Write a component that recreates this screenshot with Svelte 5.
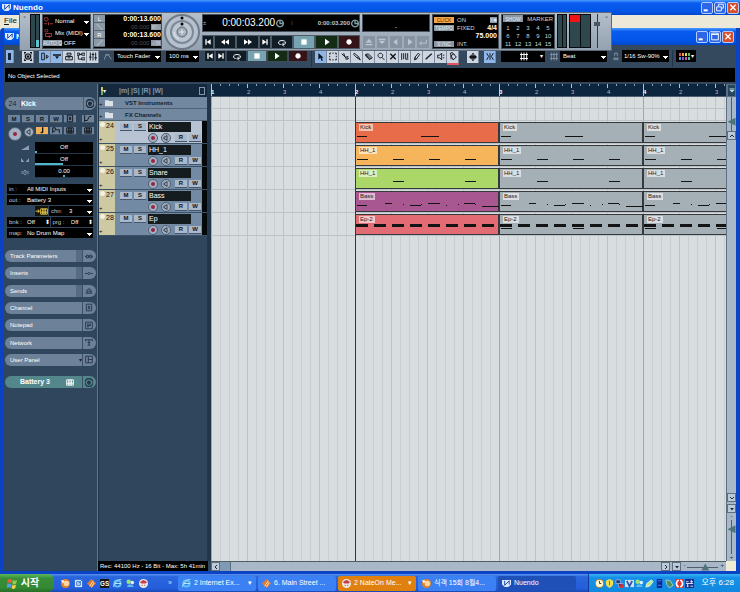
<script>
  // glyphs on a 12x12 grid; "line" ones are stroked, the rest filled
  const glyphs = {
    toStart: { d: 'M2 2h2v8H2zM10 2v8L4 6z' },
    rewind: { d: 'M6 2v8L0 6zM12 2v8L6 6z' },
    forward: { d: 'M0 2v8l6-4zM6 2v8l6-4z' },
    toEnd: { d: 'M8 2h2v8H8zM2 2v8l6-4z' },
    cycle: { d: 'M4 9H3Q0 8 1 5Q2 3 6 3Q10 3 11 5Q12 8 9 9H7M9 6L6 9l3 3', line: true },
    stop: { d: 'M2 2h8v8H2z' },
    play: { d: 'M3 1v10l7-5z' },
    record: { d: 'M6 2a4 4 0 1 0 .1 0z' },
    arrow: { d: 'M2 0v10l3-3l2 5l2-1l-2-4h3z' },
    range: { d: 'M1 1h2M5 1h2M9 1h2v2M11 5v2M11 9v2H9M7 11H5M3 11H1V9M1 7V5M1 3V1', line: true },
    split: { d: 'M1 2l6 5M4 1l2 6M7 7l4-1M7 7l1 4M10 8a1 1 0 1 0 .1 0', line: true },
    glue: { d: 'M2 1l6 5l3 5l-5-3l-5-5z M8 6L6 8', line: true },
    erase: { d: 'M1 3l4-1l6 6l-4 2zM1 3v2l6 6v-1M3 3l6 6', line: true },
    zoom: { d: 'M5 1a3.500 3.500 0 1 0 .1 0M7 7l4 4', line: true },
    mute: { d: 'M2 2l8 8M10 2l-8 8', line: true, bold: true },
    warp: { d: 'M1 1v10M4 1v9M7 1v9M10 1v8M7 10h4', line: true },
    draw: { d: 'M2 11l1-4l5-6l2 2l-5 7zM3 7l2 3', line: true },
    line: { d: 'M1 10l9-8', line: true, bold: true },
    speaker: { d: 'M1 4h3l3-3v10L4 8H1zM9 4h2M9 8h2', line: true },
    paint: { d: 'M3 5l4-3l4 5l-5 4zM3 5L2 1l3-1l2 3M3 5v5', line: true },
    inspect: { d: 'M1 1h4v10H1zM8 4l3 2l-3 3z', line: true },
    info: { d: 'M0 2h12v2H0zM3 5h6L6 9z' },
    overview: { d: 'M3 1h6v3H3zM1 6h10v5H1zM4 8h4', line: true },
    pool: { d: 'M0 1h4v3H0zM7 1h5v3H7zM7 8h5v3H7zM2 4v6h5M4 3h3', line: true },
    mixer: { d: 'M2 0v12M6 0v12M10 0v12M0 7h4M4 3h4M8 8h4', line: true },
    constrain: { d: 'M6 2a4 4 0 1 0 .1 0M6 5a1 1 0 1 0 .1 0M0 3V0h3M9 0h3v3M0 9v3h3M9 12h3V9', line: true, bold: true },
    autom: { d: 'M0 11l3-7h4l4 6M2 3h3M6 3h2', line: true },
    scroll: { d: 'M5 0h2v4h1V2l4 4l-4 4V8H7v4H5V8H4v2L0 6l4-4v2h1z' },
    snap: { d: 'M6 1v10M1 1l3 5l-3 5M11 1L8 6l3 5', line: true },
    grid: { d: 'M2 0v12M6 0v12M10 0v12M0 3h12M0 9h12', line: true },
    quantize: { d: 'M4 1v4M8 1v4M4 1h4M3 8h2v3H3zM7 8h2v3H7z', line: true },
    up: { d: 'M6 1l5 6H1zM1 9h10v2H1z' },
    down: { d: 'M6 9L1 4h10zM1 1h10v2H1z' },
    left: { d: 'M2 6l6-5v10z' },
    right: { d: 'M3 1v10l7-5z' },
    enter: { d: 'M11 2v5H1M4 4L1 7l3 3', line: true },
    edit: { d: 'M4 6h4Q8 4 6 4Q4 4 4 6Q4 9 8 8M6 0a6 6 0 1 0 .1 0', line: true, bold: true },
    monitor: { d: 'M2 4h2l4-3v10L4 8H2z', line: true },
    folder: { d: 'M0 2h5l1 1h6v8H0z' },
    note: { d: 'M7 1v8M7 9H4', line: true, bold: true },
    link: { d: 'M0 6h2M10 6h2M2 4h3v4H2zM7 4h3v4H7zM5 6h2', line: true },
    insert: { d: 'M0 6h4M8 6h4M6 4l2 2l-2 2l-2-2z', line: true },
    send: { d: 'M1 10h10M3 10V7h6v3M2 7Q6 0 10 7', line: true },
    strip: { d: 'M2 1h8v10H2zM5 4h2v4H5z', line: true },
    pad: { d: 'M1 1h10v10H1zM3 4h6M3 6h6M3 8h3', line: true },
    net: { d: 'M0 2h12M6 2v8M4 10h4M1 2v2M11 2v2M4 6h4', line: true },
    panes: { d: 'M1 1h10v10H1zM5 1v10M5 6h6', line: true },
    keys: { d: 'M1 2h10v8H1zM4 2v8M6 2v8M8 2v8M1 7h10', line: true },
    bridge: { d: 'M1 10V2h4v3h6v5M1 7h4', line: true },
    curve: { d: 'M1 11V1M1 9h4l3-6h3', line: true },
    ramp: { d: 'M0 9L12 2v7z' },
    pan: { d: 'M0 3v6h5zM12 3v6H7z' },
    delay: { d: 'M2 4L0 6l2 2M10 4l2 2l-2 2M6 3a3 3 0 1 0 .1 0M6 4v2h1', line: true },
    clock: { d: 'M6 1a5 5 0 1 0 .1 0M6 2v4h4', line: true, bold: true },
    chevUp: { d: 'M2 8l4-4l4 4', line: true, bold: true },
    chevDown: { d: 'M2 4l4 4l4-4', line: true, bold: true },
    chevLeft: { d: 'M8 2L4 6l4 4', line: true, bold: true },
    chevRight: { d: 'M4 2l4 4l-4 4', line: true, bold: true },
    caret: { d: 'M2 4h8l-4 5z' },
    min: { d: 'M1 8h6v3H1z' },
    restore: { d: 'M4 1h7v6H8M4 4V1M1 5h7v6H1z', line: true },
    max: { d: 'M1 1h10v10H1zM1 3h10', line: true },
    close: { d: 'M2 2l8 8M10 2l-8 8', line: true, bold: true }
  };

  const transport = [
    ['toStart', 'Go to start'],
    ['rewind', 'Rewind', 'wide'],
    ['forward', 'Forward', 'wide'],
    ['toEnd', 'Go to end'],
    ['cycle', 'Cycle', 'wide'],
    ['stop', 'Stop', 'wide stop'],
    ['play', 'Play', 'wide play'],
    ['record', 'Record', 'wide rec']
  ];
  const miniTransport = transport.filter(([name]) => name !== 'rewind' && name !== 'forward');
  const views = ['inspect', 'info', 'overview', 'pool', 'mixer'];
  const tools = ['arrow', 'range', 'split', 'glue', 'erase', 'zoom', 'mute', 'warp', 'draw', 'line', 'speaker', 'paint'];
  const nudge = ['up', 'down', 'left', 'right', 'enter'];
  const swatches = ['#e64d3c', '#f0a53c', '#e6dc46', '#5abe50', '#46a0dc', '#8c5ac8', '#c85ab4', '#46c8a0'];

  const beats4 = [1, 37, 73, 109].map((x) => [x, 14, 11, 1]);
  const ep = Array.from({ length: 8 }, (_, i) => [i * 18, 10, 12, 3]);
  const bass = [
    [1, 14, 10, 1], [29, 12, 7, 1], [47, 13, 1, 1], [54, 14, 11, 1], [65, 13, 1, 1], [72, 12, 12, 1],
    [90, 14, 1, 1], [102, 13, 1, 1], [108, 12, 11, 1], [119, 13, 1, 1], [126, 15, 17, 1]
  ];

  const tracks = [
    { no: 24, name: 'Kick', clip: 'Kick', color: '#e86c4a', notes: [[1, 14, 10, 1], [65, 14, 18, 1]] },
    { no: 25, name: 'HH_1', clip: 'HH_1', color: '#f7b55b', notes: beats4 },
    { no: 26, name: 'Snare', clip: 'HH_1', color: '#abd768', notes: [[37, 13, 11, 1], [109, 13, 11, 1]] },
    { no: 27, name: 'Bass', clip: 'Bass', color: '#a95791', notes: bass },
    { no: 28, name: 'Ep', clip: 'Ep-2', color: '#e36b74', notes: ep }
  ];
  let selected = $state(24);

  const faders = [
    { icon: 'ramp', label: 'Volume', value: 'Off', from: 0, to: 3 },
    { icon: 'pan', label: 'Pan', value: 'Off', from: 0, to: 48 },
    { icon: 'delay', label: 'Delay', value: '0.00', from: 48, to: 51 }
  ];
  const tabs = [
    ['Track Parameters', 'link', true],
    ['Inserts', 'insert', true],
    ['Sends', 'send', true],
    ['Channel', 'strip'],
    ['Notepad', 'pad'],
    ['Network', 'net'],
    ['User Panel', 'panes']
  ];
  const beats = Array.from({ length: 15 }, (_, i) => ({ bar: i % 4 === 0, n: i % 4 === 0 ? i / 4 + 1 : (i % 4) + 1 }));

  const tasks = [
    { text: '2 Internet Ex...', app: 'ie', more: true },
    { text: '6. Main Street ...', app: 'winamp' },
    { text: '2 NateOn Me...', app: 'nate', more: true, cls: 'alert' },
    { text: '식객 15회 8월4...', app: 'ball' },
    { text: 'Nuendo', app: 'nuendo', cls: 'active' }
  ];
  const quick = ['ball', 'desk', 'winamp', 'gs', 'ie', 'msn', 'nate'];
  const tray = ['clock', 'shield', 'net', 'v', 'msn', 'pen', 'panel', 'usb', 'stopper', 'bars'];
</script>

{#snippet glyph(name)}
  <svg class="glyph" class:line={glyphs[name].line} class:bold={glyphs[name].bold} viewBox="0 0 12 12" aria-hidden="true">
    <path d={glyphs[name].d} />
  </svg>
{/snippet}

{#snippet app(name)}
  <svg class="app" viewBox="0 0 10 10" aria-hidden="true">
    {#if name === 'ie'}
      <circle cx="5" cy="5" r="3.500" fill="none" stroke="#5fc8f5" stroke-width="2" />
      <path d="M2 5h7M1 9Q-1 8 4 3T9 1" fill="none" stroke="#c5ecff" />
    {:else if name === 'winamp'}
      <path d="M5 0l5 5l-5 5l-5-5z" fill="#e07a30" />
      <path d="M3 8L7 2M5 9l3-5" stroke="#fff0c0" />
    {:else if name === 'nate'}
      <circle cx="5" cy="5" r="5" fill="#f4e8e0" />
      <path d="M1 4Q5 -2 9 4L7 5H3z" fill="#c33f4e" />
      <path d="M3 7h1M6 7h1" stroke="#333" />
    {:else if name === 'ball'}
      <circle cx="5" cy="5" r="5" fill="#e88024" />
      <circle cx="6" cy="5" r="3" fill="#ffd9a0" />
      <path d="M0 1l4 1l-2 3z" fill="#fff" />
    {:else if name === 'desk'}
      <path d="M1 1h8v8H1z" fill="#d4e8fa" />
      <path d="M3 7V3h4v4zM5 5l4-4" fill="none" stroke="#286ab8" />
    {:else if name === 'gs'}
      <path d="M0 0h10v10H0z" fill="#151515" />
      <text x="0" y="8" font-size="7" font-weight="bold" fill="#fff">GS</text>
    {:else if name === 'msn'}
      <circle cx="3" cy="3" r="2.500" fill="#9be078" />
      <circle cx="7" cy="4" r="2" fill="#d7f0ff" />
      <path d="M1 9Q2 5 5 6T9 9z" fill="#62b8e8" />
    {:else if name === 'nuendo'}
      <path d="M0 1h10v5L7 9H3L0 6z" fill="#dce8ff" />
      <path d="M3 2v5l5-5v4" fill="none" stroke="#0c3d9c" />
    {:else if name === 'clock'}
      <circle cx="5" cy="5" r="4.500" fill="#fff6cc" stroke="#a77a28" />
      <path d="M5 2v3h2" fill="none" stroke="#333" />
    {:else if name === 'shield'}
      <path d="M5 0l4 2v3q0 3-4 5q-4-2-4-5V2z" fill="#f1df50" />
      <path d="M5 2v5" stroke="#7e6a10" />
    {:else if name === 'net'}
      <path d="M1 1h5v4H1zM4 5h5v4H4z" fill="#213874" stroke="#8fa9d8" />
      <path d="M6 6l4 4M10 6L6 10" stroke="#e82c2c" stroke-width="2" />
    {:else if name === 'v'}
      <path d="M0 1h10v8H0z" fill="#cfe0f5" />
      <path d="M2 2l3 6l3-6" fill="none" stroke="#3058a8" stroke-width="2" />
    {:else if name === 'pen'}
      <path d="M1 9l1-4l5-4l2 2l-4 5z" fill="#b9ec86" stroke="#eee" />
    {:else if name === 'panel'}
      <path d="M2 0h6v10H2z" fill="#0c2798" />
      <path d="M3 2h4M3 7h4" stroke="#5a86ec" />
    {:else if name === 'usb'}
      <path d="M1 1l5 1l3 5l-4 3l-3-4z" fill="#4a8f62" stroke="#a9cfbc" />
    {:else if name === 'stopper'}
      <path d="M0 0h10v10H0z" fill="#e03434" />
      <path d="M4 1Q-1 5 4 9M6 1q5 4 0 8" fill="none" stroke="#fff" stroke-width="2" />
    {:else}
      <path d="M0 0h10v10H0z" fill="#182c88" />
      <path d="M1 3h3M6 3h3M1 5h8M2 8h2M6 8h3M3 5v4M7 1v4" stroke="#e8ecff" />
    {/if}
  </svg>
{/snippet}

{#snippet winButtons(mid)}
  <div class="win-buttons">
    <button aria-label="Minimize">{@render glyph('min')}</button>
    <button aria-label="Resize">{@render glyph(mid)}</button>
    <button class="close" aria-label="Close">{@render glyph('close')}</button>
  </div>
{/snippet}

<div class="desktop">
  <header class="titlebar">
    {@render app('nuendo')}
    <h1>Nuendo</h1>
    {@render winButtons('restore')}
  </header>
  <nav class="menubar"><a href="#file"><u>F</u>ile</a></nav>

  <section class="project">
    <header class="titlebar inner">
      {@render app('nuendo')}
      <h2>N</h2>
      {@render winButtons('max')}
    </header>

    <div class="toolbar">
      <button class="tool on narrow" aria-label="Activate project"><i></i></button>
      <button class="tool apart" aria-label="Constrain delay">{@render glyph('constrain')}</button>
      <div class="tools views">
        {#each views as v, i}
          <button class="tool" class:on={i < 2} aria-label={v}>{@render glyph(v)}</button>
        {/each}
      </div>
      <div class="pair">
        <span class="dim">{@render glyph('autom')}</span>
        <label class="pick w47"><select aria-label="Automation mode"><option>Touch Fader</option></select></label>
      </div>
      <label class="pick w33"><select aria-label="Return time"><option>100 ms</option></select></label>
      <div class="mini">
        {#each miniTransport as [name, label, cls]}
          <button class={cls} aria-label={label}>{@render glyph(name)}</button>
        {/each}
      </div>
      <hr />
      <div class="tools">
        {#each tools as t, i}
          <button class="tool" class:on={i === 0} class:marked={t === 'paint'} aria-label={t}>{@render glyph(t)}</button>
        {/each}
      </div>
      <button class="tool apart" aria-label="Auto scroll">{@render glyph('scroll')}</button>
      <button class="tool on" aria-label="Snap">{@render glyph('snap')}</button>
      <button class="pick w44 center" aria-label="Grid mode">{@render glyph('grid')}<b>▾</b></button>
      <div class="pair">
        <span class="dim">{@render glyph('grid')}</span>
        <label class="pick w47"><select aria-label="Grid type"><option>Beat</option></select></label>
      </div>
      <div class="pair">
        <span class="dim">{@render glyph('quantize')}</span>
        <label class="pick w47 tight"><select aria-label="Quantize"><option>1/16 Sw-90%</option></select></label>
      </div>
      <hr />
      <button class="pick palette" aria-label="Colours">
        <span class="swatches">
          {#each swatches as color}<i style="background: {color}"></i>{/each}
        </span><b>▾</b>
      </button>
    </div>

    <div class="infoline">No Object Selected</div>

    <div class="workspace">
      <aside class="inspector">
        <div class="track-head">
          <span class="no">24</span><strong>Kick</strong>
          <button aria-label="Edit channel">{@render glyph('edit')}</button>
        </div>

        <div class="switches">
          <button>M</button><button>S</button><button>R</button><button>W</button>
          <button aria-label="Input transformer">{@render glyph('strip')}</button>
          <button aria-label="Lanes" class="apart">{@render glyph('curve')}</button>
        </div>
        <div class="switches second">
          <button class="round big" aria-label="Record enable"><i></i></button>
          <button class="round" aria-label="Monitor">{@render glyph('monitor')}</button>
          <button class="lit" aria-label="Timebase">{@render glyph('note')}</button>
          <button aria-label="Lock">{@render glyph('bridge')}</button>
          <button aria-label="Lane display">{@render glyph('keys')}</button>
          <button aria-label="Drums" class="apart">{@render glyph('keys')}</button>
        </div>

        <div class="faders">
          {#each faders as f}
            <label>
              {@render glyph(f.icon)}
              <span class="field">
                <input value={f.value} aria-label={f.label} />
                <i style="margin-left: {f.from}%; width: {f.to - f.from}%"></i>
              </span>
            </label>
          {/each}
        </div>

        <div class="routing">
          <label><span>in :</span><select><option>All MIDI Inputs</option></select></label>
          <label><span>out :</span><select><option>Battery 3</option></select></label>
          <div class="chn">
            <button aria-label="Edit instrument">➜{@render glyph('keys')}</button>
            <label><span>chn:</span><select><option>3</option></select></label>
          </div>
          <div class="patch">
            <label><span>bnk :</span><input value="Off" /><b>⬍</b></label>
            <label><span>prg :</span><input value="Off" /><b>⬍</b></label>
          </div>
          <label><span>map:</span><select><option>No Drum Map</option></select></label>
        </div>

        <div class="tabs">
          {#each tabs as [name, icon, slot]}
            <button>
              <span class="name">{name}</span>
              {#if slot}<i></i>{/if}
              {#if name === 'User Panel'}<b>▾</b>{/if}
              <span class="end">{@render glyph(icon)}</span>
            </button>
          {/each}
        </div>
        <div class="tabs instrument">
          <button>
            <strong class="name">Battery 3</strong>
            <span class="kbd">{@render glyph('keys')}</span>
            <span class="end">{@render glyph('edit')}</span>
          </button>
        </div>
      </aside>

      <div class="tracklist">
        <div class="list-head">
          <span class="leds"><i></i><i></i></span><b>▾</b>
          <span class="globals">|m| |S| |R| |W|</span>
          <button aria-label="Divide track list"></button>
        </div>
        {#each ['VST Instruments', 'FX Channels'] as name}
          <div class="folder"><span class="plus">+</span>{@render glyph('folder')}<span class="label">{name}</span></div>
        {/each}
        {#each tracks as t}
          <!-- svelte-ignore a11y_click_events_have_key_events, a11y_no_static_element_interactions -->
          <div class="track" class:selected={selected === t.no} onclick={() => (selected = t.no)}>
            <div class="strip"><i></i><span>{t.no}</span><em>+</em></div>
            <div class="controls">
              <div class="line">
                <button>M</button><button>S</button><input value={t.name} aria-label="Track name" />
              </div>
              <div class="line lower">
                <button class="round" aria-label="Record enable"><i></i></button>
                <button class="round" aria-label="Monitor">{@render glyph('monitor')}</button>
                <button class="gap">R</button><button>W</button>
              </div>
            </div>
            <div class="level"></div>
          </div>
        {/each}
      </div>

      <div class="arrange">
        <div class="ruler">
          {#each beats as b}<span class:bar={b.bar}>{b.n}</span>{/each}
        </div>
        <div class="lanes">
          <div class="cursor"></div>
          <div class="lane thin"></div>
          <div class="lane thin"></div>
          {#each tracks as t}
            <div class="lane">
              {#each [0, 1, 2] as n}
                <div class="clip" style={n === 0 ? `background: ${t.color}` : ''}>
                  <span>{t.clip}</span>
                  <svg viewBox="0 0 144 18" aria-hidden="true">
                    {#each t.notes as [x, y, w, h]}
                      <rect {x} y={y - 1} width={w} height={h} />
                    {/each}
                    {#if n > 0 && t.notes === ep}
                      <rect x="1" y="13" width="11" height="1" /><rect x="73" y="13" width="11" height="1" />
                    {/if}
                  </svg>
                </div>
              {/each}
            </div>
          {/each}
        </div>
      </div>

      <div class="vbar">
        <button class="corner" aria-label="Ruler format">{@render glyph('down')}</button>
        <input class="short" type="range" value="20" aria-label="Waveform zoom" />
        <button aria-label="Scroll up">{@render glyph('chevUp')}</button>
        <div class="space"></div>
        <button aria-label="Scroll down">{@render glyph('chevDown')}</button>
        <button class="preset" aria-label="Track height presets">{@render glyph('caret')}</button>
        <small>-</small>
        <input type="range" value="80" aria-label="Vertical zoom" />
        <small>+</small>
      </div>

      <div class="status">Rec: 44100 Hz - 16 Bit - Max: 5h 41min</div>
      <div class="hbar">
        <button aria-label="Scroll left">{@render glyph('chevLeft')}</button>
        <div class="thumb"></div>
        <div class="space"></div>
        <button aria-label="Scroll right">{@render glyph('chevRight')}</button>
        <button class="preset" aria-label="Zoom presets">{@render glyph('caret')}</button>
        <small>-</small>
        <input type="range" value="60" aria-label="Horizontal zoom" />
        <small>+</small>
      </div>
      <div class="grip"></div>
    </div>
  </section>

  <footer class="taskbar">
    <button class="start">
      <svg viewBox="0 0 12 12" aria-hidden="true">
        <path d="M1 2q3-2 4 0v4q-2-2-5 0z" fill="#f0603a" />
        <path d="M6 2q3 2 5 0L10 6q-2 2-4 0z" fill="#8fd050" />
        <path d="M0 7q3-2 5 0l-1 4q-2-2-4 0z" fill="#4f9cf0" />
        <path d="M6 7q2 2 4 0l-1 4q-2 2-4 0z" fill="#f8d048" />
      </svg>
      시작
    </button>
    <div class="quick">
      {#each quick as q}<button aria-label={q}>{@render app(q)}</button>{/each}
    </div>
    <span class="more">»</span>
    <div class="tasks">
      {#each tasks as t}
        <button class={t.cls}>{@render app(t.app)}<span>{t.text}</span>{#if t.more}<b>▾</b>{/if}</button>
      {/each}
    </div>
    <div class="tray">
      {#each tray as t}{@render app(t)}{/each}
      <time>오후 6:28</time>
    </div>
  </footer>

  <!-- floating transport panel -->
  <div class="transport">
    <button class="box" aria-label="Close transport">▫</button>
    <div class="meters"><i></i><i class="hot"></i></div>
    <div class="screen modes">
      <label><svg viewBox="0 0 12 12" aria-hidden="true"><circle cx="3" cy="3" r="2.500" /><path d="M0 9h4M6 7v4M8 9h4" /></svg><select aria-label="Record mode"><option>Normal</option></select></label>
      <label><svg viewBox="0 0 12 12" aria-hidden="true"><circle cx="3" cy="2" r="2" /><path d="M2 6h8v4H2zM7 8v4" /></svg><select aria-label="Cycle record mode"><option>Mix (MIDI)</option></select></label>
      <div><span class="tag">AUTO Q</span> OFF</div>
    </div>
    <div class="screen locators">
      <button>L</button><strong>0:00:13.600</strong>
      <button>╲</button><span>00.000 <em class="tag">II▷</em></span>
      <button>R</button><strong>0:00:13.600</strong>
      <button>╱</button><span>00.000 <em class="tag">◁II</em></span>
    </div>
    <svg class="jog" viewBox="0 0 36 36" aria-hidden="true">
      <circle cx="18" cy="18" r="18" fill="#6e7a88" />
      <circle cx="18" cy="18" r="16" fill="#b6c1cd" />
      <circle cx="18" cy="18" r="12" fill="#7c8998" />
      <circle cx="18" cy="18" r="10" fill="#bcc7d2" />
      <circle cx="18" cy="18" r="5" fill="#9eabb8" stroke="#5d6976" />
      <path d="M15 18h6M18 15v6M10 18a8 8 0 0 0 5 7" stroke="#e5ebf0" fill="none" />
      <circle cx="18" cy="4" r="1.500" /><circle cx="18" cy="10" r="1.500" />
    </svg>
    <div class="main">
      <div class="screen clock">
        <span>±</span><strong>0:00:03.200</strong>{@render glyph('clock')}
        <span class="sep">⁞</span><small>0:00:03.200</small>{@render glyph('clock')}
      </div>
      <div class="keys">
        {#each transport as [name, label, cls]}
          <button class={cls} aria-label={label}>{@render glyph(name)}</button>
        {/each}
      </div>
    </div>
    <div class="main marks">
      <div class="screen blank">-</div>
      <div class="keys off">
        {#each nudge as n}<button disabled aria-label={n}>{@render glyph(n)}</button>{/each}
      </div>
    </div>
    <div class="screen tempo">
      <div><button class="tag click">CLICK</button><span>ON</span><em class="tag">II✱</em></div>
      <div><button class="tag">TEMPO</button><span>FIXED</span><strong>4/4</strong></div>
      <div><strong>75.000</strong></div>
      <div><button class="tag">SYNC</button><span>INT.</span></div>
    </div>
    <div class="screen markers">
      <button class="tag">SHOW</button><span>MARKER</span>
      {#each Array(15) as _, i}<button>{i + 1}</button>{/each}
    </div>
    <div class="meters"><i></i><i></i></div>
    <div class="meters clipmeter"><i class="over"></i><i></i></div>
    <input type="range" value="75" aria-label="Output level" />
    <button class="box" aria-label="Close panel">▫</button>
  </div>
</div>

<style>
  :global(body) {
    margin: 0;
    overflow: hidden;
  }

  .desktop {
    --slate: #30465c;
    --ink: #10141a;
    --key: #aab8ca;
    position: relative;
    min-height: 100vh;
    display: flex;
    flex-direction: column;
    font: 6px/8px "Liberation Sans", "Noto Sans CJK KR", sans-serif;
    background: #ece9d8;
    color: #fff;
    user-select: none;
  }

  .desktop :is(button, input, select) {
    font: inherit;
    color: inherit;
    margin: 0;
    padding: 0;
    border: 0;
    background: none;
    border-radius: 0;
    min-width: 0;
    box-sizing: border-box;
    appearance: none;
  }

  .desktop button {
    display: flex;
    align-items: center;
    justify-content: center;
  }

  /* small stepped arrow at the right end */
  .desktop select {
    --px: linear-gradient(#fff, #fff);
    height: 9px;
    background: var(--px) right 1px top 4px / 5px 1px no-repeat,
      var(--px) right 2px top 5px / 3px 1px no-repeat,
      var(--px) right 3px top 6px / 1px 1px no-repeat;
  }

  b {
    font-weight: normal;
  }

  i {
    display: block;
  }

  .glyph {
    width: 8px;
    height: 8px;
    flex: none;
    fill: currentColor;
  }

  .glyph.line {
    fill: none;
    stroke: currentColor;
    stroke-width: 1.4;
  }

  .glyph.bold {
    stroke-width: 2;
  }

  .app {
    width: 9px;
    height: 9px;
    flex: none;
  }

  /* window frames */
  .titlebar {
    height: 15px;
    display: flex;
    align-items: center;
    gap: 2px;
    padding: 0 1px 0 2px;
    background: linear-gradient(#4a9cff, #0a5cf0 20%, #0055e6 75%, #0048cc);
  }

  .titlebar h1,
  .titlebar h2 {
    margin: 0;
    flex: 1;
    font-size: 8px;
    line-height: 12px;
  }

  .titlebar.inner {
    height: 17px;
    padding: 0 2px 0 1px;
  }

  .win-buttons {
    display: flex;
    gap: 1px;
  }

  .win-buttons button {
    width: 12px;
    height: 12px;
    border: 1px solid #b4ccff;
    border-radius: 2px;
    background: #2f66e8;
  }

  .win-buttons .close {
    background: #d94f2c;
  }

  .menubar {
    height: 13px;
    padding-left: 4px;
    font-size: 8px;
    line-height: 12px;
    background: #ece9d8;
  }

  .menubar a {
    color: #111;
    text-decoration: none;
  }

  .project {
    flex: 1;
    display: flex;
    flex-direction: column;
    border: solid #0b43c4;
    border-width: 0 4px 3px;
    border-top-left-radius: 4px;
    background: var(--slate);
  }

  /* toolbar */
  .toolbar {
    height: 23px;
    box-sizing: border-box;
    padding: 5px 0 0 2px;
    display: flex;
    align-items: flex-start;
    gap: 5px;
    background: #34485e;
  }

  .toolbar hr {
    width: 1px;
    height: 17px;
    margin: 0 -2px;
    border: 0;
    flex: none;
    background: #22344a;
  }

  .tool {
    width: 12px;
    height: 13px;
    flex: none;
  }

  .toolbar .tool {
    color: var(--ink);
    background: #ccd5e0;
    border-right: 1px solid #7d8b9c;
  }

  .toolbar .tool.on {
    background: #8fb6e8;
  }

  .toolbar .tool.marked {
    box-shadow: 0 2px 0 #e05560;
  }

  .toolbar .narrow {
    width: 8px;
  }

  .narrow i {
    width: 3px;
    height: 7px;
    background: #14243a;
  }

  .toolbar .apart {
    margin-left: 3px;
  }

  .tools,
  .pair {
    display: flex;
  }

  .pair {
    gap: 2px;
  }

  .dim {
    color: #8493a5;
    padding-top: 2px;
  }

  .toolbar .pick {
    display: flex;
    align-items: center;
    height: 12px;
    flex: none;
    background: #000;
  }

  .pick select {
    flex: 1;
    padding-left: 3px;
  }

  .tight select {
    padding-left: 2px;
  }

  .w47 { width: 47px; }
  .w44 { width: 44px; }
  .w33 { width: 33px; }

  .toolbar .center {
    justify-content: flex-end;
    gap: 12px;
    padding-right: 2px;
  }

  .toolbar .palette {
    width: 20px;
    gap: 1px;
  }

  .swatches {
    display: grid;
    grid-template-columns: repeat(4, 2px);
    gap: 1px;
  }

  .swatches i {
    height: 3px;
  }

  .mini,
  .keys {
    display: flex;
    background: #05090e;
  }

  .mini button,
  .keys button {
    flex: 11 1 0;
    height: 13px;
    box-sizing: border-box;
    border: 1px solid #3a4a58;
    background: #101c26;
  }

  .mini {
    width: 104px;
  }

  .mini button {
    height: 12px;
  }

  .mini .wide,
  .keys .wide {
    flex-grow: 22;
  }

  .mini .stop,
  .keys .stop {
    background: #78a3b0;
  }

  .mini .play,
  .keys .play {
    background: #142c14;
  }

  .mini .rec,
  .keys .rec {
    background: #351418;
  }

  .infoline {
    height: 16px;
    box-sizing: border-box;
    margin: 0 1px;
    padding: 4px 3px;
    background: #000;
    border-bottom: 2px solid #33475c;
  }

  .workspace {
    flex: 1;
    display: grid;
    grid-template: 1fr 10px / 94px 113px 1fr 10px;
  }

  /* inspector */
  .inspector {
    grid-row: span 2;
    padding: 13px 1px 0;
    border-right: 1px solid #62758a;
    display: flex;
    flex-direction: column;
  }

  .track-head {
    display: flex;
    align-items: center;
    height: 13px;
    border-radius: 7px;
    overflow: hidden;
    background: #6d8299;
    font-size: 7px;
  }

  .track-head .no {
    width: 15px;
    color: #1c2836;
    text-align: center;
    border-right: 1px solid #4d6076;
  }

  .track-head strong {
    flex: 1;
  }

  .track-head button {
    width: 13px;
    height: 13px;
    color: #1c2b3a;
    border-left: 1px solid #4d6076;
  }

  .switches {
    display: flex;
    align-items: center;
    gap: 2px;
    margin: 4px 0 0 3px;
    height: 10px;
  }

  .switches button,
  .line button {
    width: 12px;
    height: 8px;
    color: var(--ink);
    background: #6d839b;
    border-bottom: 1px solid #43566c;
    font-weight: bold;
  }

  .switches .apart {
    margin-left: 4px;
  }

  .switches.second {
    margin-top: 3px;
    align-items: flex-start;
  }

  .switches .lit {
    background: #f1b257;
  }

  .switches .round,
  .line .round {
    width: 10px;
    height: 10px;
    border: 1px solid #4f5f71;
    border-radius: 50%;
    background: #a1b0c2;
  }

  .switches .big {
    width: 14px;
    height: 14px;
  }

  .round i {
    width: 4px;
    height: 4px;
    border-radius: 50%;
    background: #9c2440;
  }

  .round .glyph {
    width: 6px;
    height: 6px;
  }

  .faders {
    margin: 5px 3px 0 0;
  }

  .faders label {
    display: flex;
    align-items: center;
    justify-content: flex-end;
    gap: 6px;
    height: 12px;
    color: #8c9caf;
  }

  .faders .field {
    width: 58px;
    height: 12px;
    box-sizing: border-box;
    border-bottom: 1px solid #24364a;
    background: #000;
    color: #fff;
  }

  .faders input {
    display: block;
    width: 100%;
    height: 9px;
    text-align: center;
  }

  .faders i {
    height: 2px;
    background: #4fb7c6;
  }

  .routing {
    display: grid;
    grid-template-columns: 100%;
    grid-auto-rows: 10px;
    gap: 1px;
    margin: 6px 3px 0 2px;
  }

  .routing label {
    display: flex;
    align-items: center;
    background: #000;
  }

  .routing label span {
    width: 17px;
    padding-left: 2px;
    flex: none;
    box-sizing: border-box;
    color: #c0cad4;
    white-space: nowrap;
  }

  .routing :is(select, input) {
    flex: 1;
    width: 20px;
    padding-left: 3px;
  }

  .routing .chn,
  .routing .patch {
    display: flex;
    gap: 1px;
  }

  .chn button {
    margin-left: 28px;
    color: #e8cc4c;
    background: #15150c;
  }

  .chn label,
  .patch label {
    flex: 1;
  }

  .tabs {
    display: flex;
    flex-direction: column;
    justify-content: space-between;
    height: 116px;
    margin-top: 12px;
  }

  .tabs button {
    height: 12px;
    padding-left: 5px;
    border-radius: 6px;
    overflow: hidden;
    background: #6d8299;
  }

  .tabs .name {
    flex: 1;
    text-align: left;
  }

  .tabs i {
    width: 6px;
    height: 12px;
    background: #566c85;
  }

  .tabs b {
    color: #1c2836;
  }

  .tabs .end {
    display: flex;
    align-items: center;
    width: 11px;
    height: 12px;
    padding-left: 2px;
    border-left: 1px solid #3c5066;
    color: #26384c;
  }

  .tabs.instrument {
    height: 12px;
    margin-top: 10px;
  }

  .instrument button {
    background: #54878c;
  }

  .instrument .name {
    font-size: 7px;
    padding-left: 10px;
  }

  .kbd {
    display: flex;
    padding-right: 8px;
  }

  /* track list */
  .tracklist {
    border-right: 4px solid #22364a;
    border-left: 1px solid #22364a;
    background: var(--slate);
  }

  .list-head {
    display: flex;
    align-items: center;
    height: 13px;
    padding: 0 2px;
    background: #15293e;
  }

  .leds i {
    width: 2px;
    height: 4px;
    background: #d9c850;
  }

  .leds i + i {
    background: #6bb36a;
  }

  .globals {
    flex: 1;
    padding-left: 13px;
    font-size: 7px;
    font-weight: bold;
    color: #8197ae;
  }

  .list-head button {
    width: 6px;
    height: 8px;
    border: 1px solid #8295aa;
  }

  .folder {
    display: flex;
    align-items: center;
    height: 12px;
    box-sizing: border-box;
    border-bottom: 1px solid #4e6378;
    background: #7188a0;
    color: #dde2e6;
  }

  .folder .plus {
    width: 6px;
    padding-top: 3px;
    color: #111;
  }

  .folder .label {
    margin-left: 12px;
    color: #16212e;
    font-weight: bold;
  }

  .track {
    display: grid;
    grid-template-columns: 16px 1fr 5px;
    height: 23px;
    box-sizing: border-box;
    border-bottom: 1px solid #3d5166;
    background: #728aa3;
  }

  .track.selected {
    background: #b7c3d2;
  }

  .strip {
    display: grid;
    grid-template: 10px 12px / 7px 9px;
    background: #cdc9a2;
    color: #111;
  }

  .strip i {
    width: 5px;
    height: 5px;
    margin: 1px;
    border-radius: 50%;
    background: #f2f0df;
  }

  .strip span {
    font-size: 7px;
    line-height: 10px;
  }

  .strip em {
    font-style: normal;
    padding-top: 4px;
  }

  .controls {
    display: flex;
    flex-direction: column;
    gap: 2px;
    padding: 1px 1px 0 5px;
  }

  .line {
    display: flex;
    align-items: center;
    gap: 2px;
    height: 9px;
  }

  .line button {
    background: var(--key);
  }

  .line input {
    width: 43px;
    height: 10px;
    padding-left: 1px;
    background: #141c20;
    font-size: 7px;
    line-height: 10px;
  }

  .line.lower {
    justify-content: flex-end;
  }

  .line.lower .round + .round {
    margin-left: 1px;
  }

  .line.lower .gap {
    margin-left: 2px;
  }

  .level {
    background: #05080b;
  }

  /* arrangement */
  .arrange {
    display: flex;
    flex-direction: column;
    min-width: 0;
    overflow: hidden;
  }

  .ruler {
    display: flex;
    height: 13px;
    box-sizing: border-box;
    border-bottom: 1px solid #4c6074;
    overflow: hidden;
    background: repeating-linear-gradient(90deg, #8fa1b3 0 1px, transparent 1px 9px) top / 100% 2px no-repeat, #0d2640;
  }

  .ruler span {
    flex: 0 0 36px;
    box-sizing: border-box;
    height: 12px;
    padding-top: 4px;
    color: #a9b8c8;
    background: linear-gradient(#b4c2d0, #b4c2d0) 0 0 / 1px 4px no-repeat;
  }

  .ruler .bar {
    color: #fff;
    font-weight: bold;
    background-size: 1px 12px;
  }

  .lanes {
    position: relative;
    flex: 1;
    overflow: hidden;
    background: repeating-linear-gradient(90deg, #a0a7ac 0 1px, transparent 1px 144px),
      repeating-linear-gradient(90deg, #bcc3c8 0 1px, transparent 1px 36px),
      repeating-linear-gradient(90deg, #c8ced2 0 1px, transparent 1px 9px), #d8dde0;
  }

  /* play position, drawn over the lanes */
  .cursor {
    position: absolute;
    top: 0;
    bottom: 0;
    left: 144px;
    width: 1px;
    background: #30363b;
  }

  .lane {
    display: flex;
    height: 23px;
    box-sizing: border-box;
    padding: 1px 0 1px 144px;
    border-bottom: 1px solid #bcc3c8;
  }

  .lane.thin {
    height: 12px;
  }

  .clip {
    position: relative;
    flex: 0 0 144px;
    height: 21px;
    box-sizing: border-box;
    border: solid #35393c;
    border-width: 1px 2px 1px 0;
    background: #a5b0b6;
  }

  .clip:nth-child(1) {
    flex-basis: 145px;
    border-left: 1px solid #35393c;
  }

  .clip span {
    display: inline-block;
    margin: 1px 0 0 3px;
    padding: 0 2px 0 1px;
    line-height: 7px;
    color: #1a1a1a;
    background: rgba(255, 255, 255, 0.6);
  }

  /* notes lie over the clip body */
  .clip svg {
    position: absolute;
    top: 0;
    left: 0;
    width: 144px;
    height: 18px;
    fill: #141414;
    shape-rendering: crispEdges;
  }

  /* scroll bars */
  .vbar,
  .hbar {
    display: flex;
    background: #a9b8c9;
    color: #1c2c3c;
  }

  .vbar {
    flex-direction: column;
    border-left: 1px solid #5d6f80;
  }

  .vbar button,
  .hbar button {
    width: 9px;
    height: 9px;
    box-sizing: border-box;
    flex: none;
    border: 1px solid #5d6f80;
    background: #bcc9d6;
  }

  .vbar .corner {
    height: 13px;
    color: #b7dbe0;
    background: #23465c;
  }

  .vbar .glyph,
  .hbar .glyph {
    width: 6px;
    height: 6px;
  }

  .vbar small,
  .hbar small {
    font-size: 6px;
    line-height: 7px;
    text-align: center;
    padding: 0 2px;
  }

  .vbar .space,
  .hbar .space {
    flex: 1;
  }

  .vbar .preset {
    margin-top: 2px;
  }

  .vbar input {
    width: 9px;
    height: 34px;
    writing-mode: vertical-lr;
    direction: rtl;
    background: linear-gradient(#4e6070, #4e6070) center / 1px 100% no-repeat;
  }

  .hbar input {
    width: 31px;
    height: 10px;
    background: linear-gradient(#4e6070, #4e6070) center / 100% 1px no-repeat;
  }

  .vbar input::-webkit-slider-thumb {
    appearance: none;
    width: 8px;
    height: 8px;
    background: #4f7478;
    clip-path: polygon(0 50%, 100% 0, 100% 100%);
  }

  .hbar input::-webkit-slider-thumb {
    appearance: none;
    width: 8px;
    height: 7px;
    background: #4f7478;
    clip-path: polygon(50% 0, 100% 100%, 0 100%);
  }

  .hbar {
    border-top: 1px solid #4e5f60;
  }

  .hbar .preset {
    margin-left: 2px;
  }

  .thumb {
    width: 10px;
    border-right: 1px solid #5d6f80;
    background: #7f9ab4;
  }

  .status {
    overflow: hidden;
    margin-right: 3px;
    padding: 1px 0 0 2px;
    white-space: nowrap;
    background: #000;
  }

  .grip {
    background: #efead6;
  }

  /* taskbar */
  .taskbar {
    display: flex;
    align-items: center;
    height: 18px;
    font-size: 7px;
    background: linear-gradient(#5a94f2, #2a66dd 15%, #245edb 80%, #1a48b4);
  }

  .taskbar .start {
    width: 54px;
    height: 18px;
    gap: 3px;
    padding-right: 8px;
    border-radius: 0 6px 6px 0;
    font-size: 10px;
    font-weight: bold;
    background: linear-gradient(#5cb85a, #388e38 25%, #348a34 75%, #256e28);
  }

  .start svg {
    width: 11px;
    height: 11px;
  }

  .quick {
    display: flex;
    gap: 4px;
    padding-left: 7px;
  }

  .more {
    width: 30px;
    text-align: right;
    padding-right: 6px;
    box-sizing: border-box;
    color: #cfe0ff;
  }

  .tasks {
    flex: 1;
    display: flex;
    gap: 2px;
    min-width: 0;
  }

  .tasks button {
    flex: 0 1 78px;
    height: 15px;
    gap: 3px;
    padding: 0 4px;
    border-radius: 2px;
    background: #3c81f3;
    white-space: nowrap;
  }

  .tasks button span {
    flex: 1;
    text-align: left;
    overflow: hidden;
  }

  .tasks .alert {
    background: #e0810f;
  }

  .tasks .active {
    background: #1e50b8;
  }

  .tray {
    display: flex;
    align-items: center;
    gap: 1px;
    height: 18px;
    padding: 0 6px;
    border-left: 1px solid #0c3c98;
    background: linear-gradient(#3cb4f4, #1590e8 20%, #1288e0);
  }

  .tray time {
    padding-left: 6px;
    font-size: 8px;
    white-space: nowrap;
  }

  /* transport */
  .transport {
    position: absolute;
    top: 12px;
    left: 19px;
    display: flex;
    gap: 2px;
    height: 39px;
    box-sizing: border-box;
    padding: 1px;
    border: 1px solid #5e6975;
    background: linear-gradient(#b4bfca, #93a1b0);
  }

  .transport .box {
    width: 7px;
    height: 6px;
    color: #222;
  }

  .meters {
    display: flex;
    gap: 1px;
    width: 10px;
    height: 34px;
    padding: 1px;
    box-sizing: border-box;
    background: #080c10;
  }

  .meters i {
    flex: 1;
    background: #2e484e;
  }

  .meters .hot {
    background: linear-gradient(#2e484e 78%, #59c4d4 78%);
  }

  .clipmeter {
    width: 22px;
  }

  .meters .over {
    background: linear-gradient(#f01414 22%, #2e484e 22%);
  }

  .screen {
    height: 35px;
    box-sizing: border-box;
    border: 1px solid #46525e;
    background: #000;
  }

  .desktop .tag {
    display: inline-block;
    font-style: normal;
    font-size: 5px;
    line-height: 6px;
    background: #8a97a4;
    color: #e6ecf2;
  }

  .modes {
    width: 49px;
    display: grid;
    grid-template-rows: 12px 12px 8px;
  }

  .modes label {
    display: flex;
    align-items: center;
    gap: 2px;
    padding-left: 1px;
  }

  .modes select {
    flex: 1;
  }

  .modes svg {
    width: 9px;
    height: 9px;
    fill: none;
    stroke: #d0484f;
  }

  .modes .tag {
    width: 19px;
    white-space: nowrap;
  }

  .locators {
    width: 69px;
    display: grid;
    grid-template: repeat(4, 8px) / 11px 1fr;
    text-align: right;
  }

  .locators button {
    background: #8b98a6;
    border-bottom: 1px solid #596673;
  }

  .locators strong {
    font-size: 7px;
  }

  .locators span {
    color: #4a545e;
  }

  .locators .tag {
    width: 10px;
    text-align: center;
  }

  .jog {
    width: 36px;
    height: 36px;
  }

  .main {
    width: 158px;
    display: flex;
    flex-direction: column;
    gap: 3px;
  }

  .main .screen {
    height: 18px;
  }

  .main .keys button {
    height: 14px;
    border-color: #4c5b68;
  }

  .clock {
    display: flex;
    align-items: center;
    gap: 1px;
    color: #fff;
  }

  .clock > span {
    width: 10px;
    color: #a2afb9;
  }

  .clock strong {
    flex: 1;
    font-size: 10px;
    font-weight: normal;
    text-align: right;
  }

  .clock .sep {
    padding-left: 6px;
  }

  .clock small {
    width: 48px;
    font-size: 6px;
    font-weight: bold;
    text-align: right;
    color: #bac6ce;
  }

  .clock .glyph {
    color: #7f9fa8;
  }

  .main.marks {
    width: 68px;
  }

  .blank {
    text-align: center;
    padding-top: 8px;
  }

  .main .keys.off {
    background: #8c99a7;
  }

  .main .keys.off button {
    color: #bcc7d1;
    background: #8793a1;
    border-color: #9eabb8;
  }

  .tempo {
    width: 67px;
    padding: 0 1px;
    display: grid;
    grid-template-rows: 9px 8px 8px 8px;
  }

  .tempo div {
    display: flex;
    align-items: center;
    justify-content: flex-end;
    gap: 3px;
  }

  .tempo button {
    width: 20px;
  }

  .tempo span {
    flex: 1;
    color: #cdd6de;
  }

  .tempo .tag.click {
    color: #5b2c00;
    background: #f3a64c;
  }

  .tempo strong {
    font-size: 7px;
  }

  .markers {
    width: 54px;
    padding: 0 1px;
    display: grid;
    grid-template: 9px repeat(3, 8px) / repeat(5, 10px);
    color: #cdd6de;
  }

  .markers .tag {
    grid-column: span 2;
    height: 7px;
  }

  .markers span {
    grid-column: span 3;
    text-align: right;
  }

  .transport input {
    width: 8px;
    height: 34px;
    writing-mode: vertical-lr;
    direction: rtl;
    background: linear-gradient(#2f3943, #2f3943) center / 1px 100% no-repeat;
  }

  .transport input::-webkit-slider-thumb {
    appearance: none;
    width: 6px;
    height: 4px;
    background: #4a5762;
  }
</style>
